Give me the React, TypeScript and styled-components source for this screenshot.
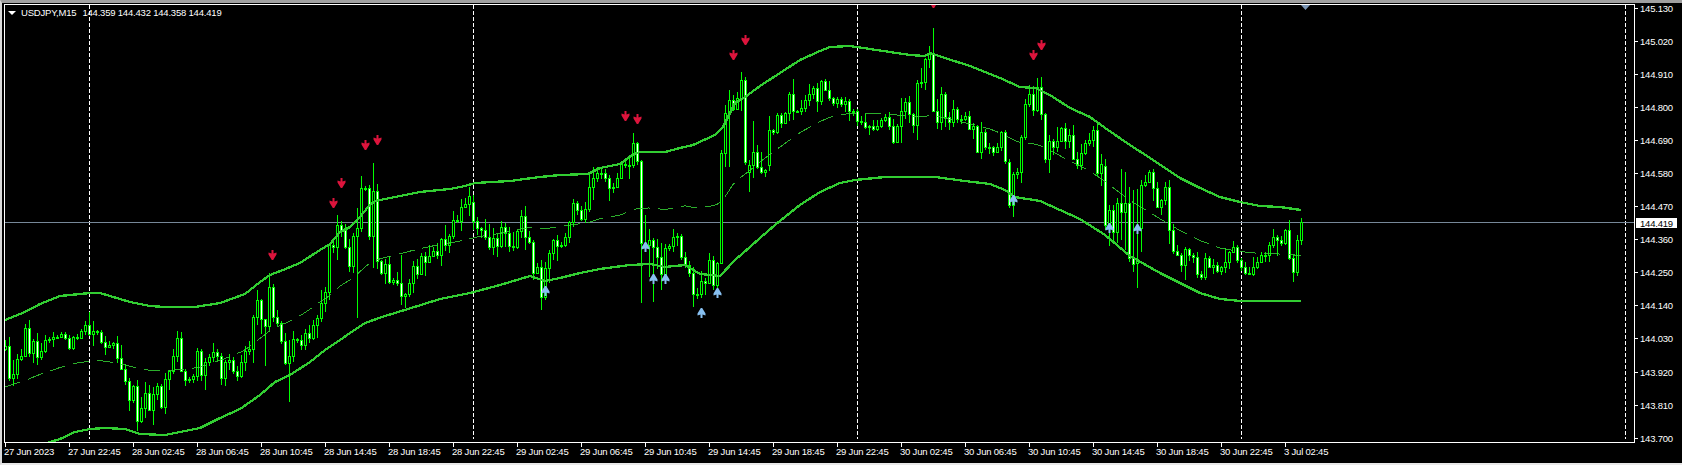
import styled, { createGlobalStyle } from "styled-components";

const GlobalStyle = createGlobalStyle`
    html, body {
        margin: 0;
        background: #000000;
        overflow: hidden;
    }
`
const Window = styled.div`
    box-sizing: border-box;
    width: 1682px;
    height: 465px;
    display: grid;
    grid-template-columns: 1631px 1fr;
    grid-template-rows: 440px 1fr;
    padding-left: 2px;
    background: #000000;
    border-top: 3px solid #a0a0a0;
    border-left: 2px solid #d8d8d8;
    border-bottom: 2px solid #e8e8e8;
    color: #FFFFFF;
    font-family: "Liberation Sans", Arial, sans-serif;
    font-size: 9.5px;
    letter-spacing: -0.2px;
    line-height: 10px;
`
const Plot = styled.div`
    position: relative;
    margin-top: 1px;
    border: 1px solid #FFFFFF;
    overflow: hidden;
`
const ChartSvg = styled.svg`
    display: block;
    width: 1629px;
    height: 437px;
`
const Legend = styled.div`
    position: absolute;
    left: 3px;
    top: 3px;
    display: flex;
    align-items: center;
    white-space: pre;
`
const LegendMark = styled.span`
    width: 0;
    height: 0;
    margin-right: 5px;
    border-left: 4px solid transparent;
    border-right: 4px solid transparent;
    border-top: 4px solid #FFFFFF;
`
const LegendSymbol = styled.span`
    margin-right: 6px;
`
const PriceAxis = styled.div`
    position: relative;
    display: flex;
    flex-direction: column;
    gap: 23.05px;
`
const PriceLabel = styled.div`
    position: relative;
    height: 10px;
    padding-left: 5px;
    line-height: 12px;
    &::before {
        content: "";
        position: absolute;
        left: 0;
        top: 5px;
        width: 3px;
        height: 1px;
        background: #FFFFFF;
    }
`
const PriceTag = styled.div`
    position: absolute;
    left: 1px;
    top: 215px;
    width: 37px;
    height: 10px;
    padding-left: 4px;
    line-height: 12px;
    background: #FFFFFF;
    color: #000000;
`
const TimeAxis = styled.div`
    grid-column: 1 / span 2;
    display: flex;
`
const TimeCell = styled.div`
    position: relative;
    flex: none;
    width: 64px;
    padding-top: 4px;
    white-space: nowrap;
    &::before {
        content: "";
        position: absolute;
        left: 1px;
        top: 0;
        width: 1px;
        height: 4px;
        background: #FFFFFF;
    }
`

const PRICES = ["145.130", "145.020", "144.910", "144.800", "144.690", "144.580", "144.470", "144.360", "144.250", "144.140", "144.030", "143.920", "143.810", "143.700"];

const TIMES = ["27 Jun 2023", "27 Jun 22:45", "28 Jun 02:45", "28 Jun 06:45", "28 Jun 10:45", "28 Jun 14:45", "28 Jun 18:45", "28 Jun 22:45", "29 Jun 02:45", "29 Jun 06:45", "29 Jun 10:45", "29 Jun 14:45", "29 Jun 18:45", "29 Jun 22:45", "30 Jun 02:45", "30 Jun 06:45", "30 Jun 10:45", "30 Jun 14:45", "30 Jun 18:45", "30 Jun 22:45", "3 Jul 02:45"];

// close of each bar in pixels, one bar every 4px starting at x=5
const CLOSES = [
    346, 378, 374, 359, 356, 328, 353, 341, 357, 351,
    340, 339, 337, 337, 334, 338, 348, 337, 338, 331,
    325, 334, 331, 332, 342, 347, 345, 343, 358, 369,
    381, 400, 386, 421, 408, 393, 410, 394, 386, 407,
    379, 371, 356, 338, 371, 380, 379, 376, 351, 375,
    362, 357, 352, 356, 378, 362, 360, 371, 376, 362,
    351, 349, 317, 300, 319, 326, 287, 317, 323, 341,
    363, 356, 339, 340, 345, 333, 338, 325, 318, 303,
    292, 245, 247, 225, 230, 247, 266, 236, 228, 188,
    188, 236, 191, 261, 273, 264, 282, 280, 283, 296,
    294, 283, 266, 274, 256, 262, 256, 251, 255, 239,
    245, 236, 220, 221, 207, 204, 196, 221, 228, 230,
    237, 247, 238, 246, 227, 233, 246, 247, 231, 216,
    237, 242, 273, 267, 297, 268, 253, 240, 246, 245,
    237, 222, 203, 210, 219, 209, 187, 178, 173, 173,
    178, 188, 187, 178, 164, 165, 165, 143, 161, 243,
    245, 240, 247, 257, 274, 248, 246, 237, 236, 257,
    265, 273, 294, 294, 281, 283, 260, 285, 263, 153,
    113, 100, 109, 98, 80, 162, 165, 152, 167, 172,
    170, 130, 132, 115, 123, 113, 94, 111, 111, 108,
    100, 94, 88, 101, 81, 90, 98, 103, 99, 104,
    101, 111, 111, 121, 122, 127, 126, 129, 126, 120,
    117, 126, 142, 126, 111, 102, 114, 125, 83, 82,
    59, 54, 111, 122, 94, 117, 122, 109, 119, 119,
    116, 129, 126, 152, 132, 147, 147, 152, 147, 132,
    161, 205, 174, 172, 137, 104, 94, 110, 87, 114,
    159, 141, 147, 141, 128, 141, 135, 159, 165, 153,
    143, 140, 130, 173, 164, 225, 210, 232, 203, 212,
    203, 258, 264, 260, 185, 182, 172, 188, 207, 200,
    187, 230, 251, 255, 265, 249, 255, 257, 274, 277,
    258, 267, 265, 271, 267, 262, 252, 247, 260, 267,
    273, 274, 267, 262, 255, 255, 245, 237, 240, 243,
    230, 258, 272, 240, 222,
];

// bars that gap away from the previous close
const OPENS: Record<number, number> = { 5: 349, 473: 202, 577: 203, 749: 172, 769: 165, 1009: 162, 1105: 166, 1137: 263, 1141: 228 };

// the wicks that stand out, as [high, low]
const WICKS: Record<number, [number, number]> = {
    137: [380, 431], 257: [290, 325], 265: [320, 366], 269: [273, 330], 289: [340, 402],
    329: [243, 300], 357: [208, 318], 361: [176, 232], 369: [185, 240], 373: [163, 268],
    401: [255, 305], 525: [206, 250], 541: [260, 310], 545: [262, 300], 641: [160, 303],
    645: [215, 250], 649: [229, 277], 653: [238, 302], 661: [243, 290], 721: [150, 192],
    725: [105, 167], 729: [90, 167], 749: [160, 192], 753: [121, 178], 933: [28, 112],
    917: [80, 140], 901: [98, 143], 1013: [172, 217], 1021: [135, 183], 1037: [78, 112],
    1041: [77, 120], 1049: [135, 173], 1105: [159, 230], 1109: [205, 246], 1113: [205, 242],
    1117: [198, 243], 1121: [169, 240], 1125: [172, 250], 1129: [187, 262], 1133: [190, 272],
    1137: [189, 288], 1141: [180, 252], 1277: [235, 256], 1289: [220, 260], 1293: [255, 282],
    1297: [235, 276], 1301: [218, 245],
};

const UPPER_BAND: [number, number][] = [
    [5, 320], [25, 312], [40, 304], [60, 296], [90, 293], [100, 293], [130, 302], [150, 306], [165, 307],
    [195, 307], [220, 303], [245, 294], [260, 282], [270, 275], [283, 270], [300, 263], [320, 250], [330, 244],
    [340, 232], [350, 227], [360, 217], [368, 207], [375, 201], [390, 198], [420, 192], [450, 189], [465, 186],
    [475, 183], [510, 181], [540, 177], [560, 175], [588, 174], [600, 168], [620, 164], [632, 155], [640, 152],
    [665, 152], [680, 148], [693, 145], [715, 135], [723, 127], [735, 103], [745, 97], [760, 86], [780, 73],
    [800, 60], [820, 51], [830, 47], [850, 46], [870, 49], [890, 52], [910, 55], [925, 56], [930, 53], [945, 58],
    [970, 66], [1000, 78], [1020, 87], [1035, 88], [1050, 95], [1070, 108], [1090, 117], [1108, 130], [1130, 145],
    [1150, 158], [1180, 178], [1200, 188], [1220, 197], [1240, 202], [1260, 206], [1280, 207], [1301, 210],
];

const LOWER_BAND: [number, number][] = [
    [5, 454], [25, 449], [50, 442], [60, 439], [75, 432], [90, 429], [105, 428], [125, 429], [140, 434], [165, 435],
    [180, 432], [200, 428], [220, 418], [240, 409], [260, 395], [275, 382], [290, 375], [310, 362], [325, 350],
    [340, 340], [350, 333], [365, 323], [385, 316], [408, 309], [440, 299], [470, 293], [500, 285], [520, 279],
    [530, 276], [545, 281], [560, 278], [580, 273], [600, 269], [630, 265], [650, 264], [665, 267], [685, 265],
    [700, 274], [720, 276], [735, 260], [750, 247], [760, 238], [775, 225], [800, 205], [820, 192], [840, 183],
    [855, 180], [885, 177], [935, 177], [965, 181], [990, 184], [1005, 190], [1015, 197], [1040, 201], [1060, 210],
    [1080, 219], [1105, 235], [1130, 256], [1160, 273], [1200, 293], [1220, 299], [1240, 301], [1301, 301],
];

const SELL_ARROWS = [[272, 255], [333, 203], [341, 183], [365, 145], [377, 140], [625, 116], [637, 119], [733, 55], [745, 40], [933, 3], [1033, 55], [1041, 45]];
const BUY_ARROWS = [[545, 291], [645, 247], [653, 279], [665, 279], [701, 313], [717, 293], [1013, 200], [1109, 228], [1137, 229]];
const DAY_LINES = [89, 473, 857, 1241, 1625];

const interpolate = (band: [number, number][], x: number) => {
    for (let i = 1; i < band.length; i++) {
        if (x <= band[i][0]) {
            const [x0, y0] = band[i - 1];
            const [x1, y1] = band[i];
            return y0 + ((y1 - y0) * (x - x0)) / (x1 - x0);
        }
    }
    return band[band.length - 1][1];
};

const toPoints = (band: [number, number][]) => band.map(([x, y]) => `${x},${y}`).join(" ");

const midBand = () => {
    const points: string[] = [];
    for (let x = 5; x <= 1301; x += 4) {
        points.push(`${x},${((interpolate(UPPER_BAND, x) + interpolate(LOWER_BAND, x)) / 2).toFixed(1)}`);
    }
    return points.join(" ");
};

// small repeatable noise so the ordinary wicks stay the same on every load
const noise = (n: number) => {
    const v = Math.sin(n * 12.9898) * 43758.5453;
    return v - Math.floor(v);
};

const Candle = ({ x, open, close }: { x: number; open: number; close: number }) => {
    const top = Math.min(open, close);
    const bottom = Math.max(open, close);
    const wick = WICKS[x] ?? [top - Math.round(noise(x) * noise(x + 1) * 16 + 1), bottom + Math.round(noise(x + 2) * noise(x + 3) * 16 + 1)];
    const height = Math.max(bottom - top, 1);
    return (
        <g>
            <rect x={x} y={wick[0]} width={1} height={wick[1] - wick[0]} fill="#00FF00" />
            <rect x={x - 1} y={top} width={3} height={height + 1} fill="#00FF00" />
            {height > 1 && <rect x={x} y={top + 1} width={1} height={height - 1} fill={close > open ? "#FFFFFF" : "#000000"} />}
        </g>
    );
};

const SELL_PATH = "M-1,-5 H1 V-1.5 L4,-2.5 V-0.5 L0.7,5 H-0.7 L-4,-0.5 V-2.5 L-1,-1.5 Z";
const BUY_PATH = "M-1,5 H1 V1.5 L4,2.5 V0.5 L0.7,-5 H-0.7 L-4,0.5 V2.5 L-1,1.5 Z";

const Chart = () => (
    <ChartSvg viewBox="5 5 1629 437">
        {DAY_LINES.map((x) => (
            <line key={x} x1={x + 0.5} y1={5} x2={x + 0.5} y2={439} stroke="#FFFFFF" strokeDasharray="4 2" shapeRendering="crispEdges" />
        ))}
        <rect x={5} y={222} width={1629} height={1} fill="#778899" />
        {CLOSES.map((close, i) => {
            const x = 5 + i * 4;
            return <Candle key={x} x={x} open={OPENS[x] ?? CLOSES[i - 1]} close={close} />;
        })}
        <polyline points={midBand()} fill="none" stroke="#32CD32" strokeDasharray="16 8" opacity={0.85} shapeRendering="crispEdges" />
        <polyline points={toPoints(UPPER_BAND)} fill="none" stroke="#32CD32" strokeWidth={2.3} shapeRendering="crispEdges" />
        <polyline points={toPoints(LOWER_BAND)} fill="none" stroke="#32CD32" strokeWidth={2.3} shapeRendering="crispEdges" />
        {SELL_ARROWS.map(([x, y]) => (
            <path key={x} transform={`translate(${x + 0.5} ${y})`} d={SELL_PATH} fill="#DC143C" />
        ))}
        {BUY_ARROWS.map(([x, y]) => (
            <path key={x} transform={`translate(${x + 0.5} ${y})`} d={BUY_PATH} fill="#87BFF0" />
        ))}
        <path d="M1301,5 H1310 L1305.5,10 Z" fill="#7A95B5" />
    </ChartSvg>
);

export default function App() {
    return (
        <>
            <GlobalStyle />
            <Window>
                <Plot>
                    <Chart />
                    <Legend>
                        <LegendMark />
                        <LegendSymbol>USDJPY,M15</LegendSymbol>
                        144.359 144.432 144.358 144.419
                    </Legend>
                </Plot>
                <PriceAxis>
                    {PRICES.map((price) => (
                        <PriceLabel key={price}>{price}</PriceLabel>
                    ))}
                    <PriceTag>144.419</PriceTag>
                </PriceAxis>
                <TimeAxis>
                    {TIMES.map((time) => (
                        <TimeCell key={time}>{time}</TimeCell>
                    ))}
                </TimeAxis>
            </Window>
        </>
    );
}
